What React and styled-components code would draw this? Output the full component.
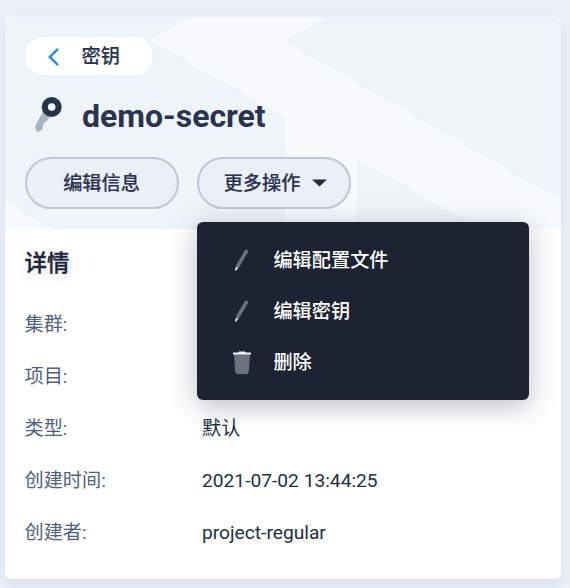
import React from 'react';
import styled, { createGlobalStyle } from 'styled-components';

const Global = createGlobalStyle`
  * { box-sizing: border-box; }
  body {
    margin: 0;
    background: #eaeff8;
    font-family: Roboto, "Noto Sans CJK SC", sans-serif;
    font-size: 19.2px;
    color: #242e42;
  }
`;

const Page = styled.main`
  height: 588px;
  padding: 17px 9px 9px 5px;
  overflow: hidden;
`;

const Card = styled.section`
  height: 562px;
  border-radius: 6px;
  background: #fff;
  box-shadow: 0 6px 12px rgba(36, 46, 66, 0.08);
`;

const Header = styled.header`
  position: relative;
  height: 212px;
  padding: 20px;
  border-radius: 9px 9px 0 0;
  background: #eff4f8;
`;

const Pattern = styled.svg`
  position: absolute;
  inset: 0;
  width: 556px;
  height: 212px;
`;

const HeaderContent = styled.div`
  position: relative;
`;

const BackLink = styled.a`
  display: flex;
  align-items: center;
  width: 128px;
  height: 38px;
  padding: 2px 0 0 22px;
  gap: 21.5px;
  border-radius: 19px;
  background: #fff;
  color: #2c3550;
  font-weight: 500;
  -webkit-text-stroke: 0.15px currentColor;
  line-height: 38px;

  svg { margin-bottom: 1px; }
`;

const TitleRow = styled.div`
  display: flex;
  align-items: center;
  height: 40px;
  margin-top: 21px;
  padding-left: 6px;
  gap: 11px;
`;

const Title = styled.h1`
  margin: 0;
  font-size: 32px;
  font-weight: 700;
  line-height: 40px;
  color: #2a3350;
`;

const Actions = styled.div`
  display: flex;
  gap: 18px;
  margin-top: 21px;
`;

const Button = styled.button`
  display: flex;
  align-items: center;
  justify-content: center;
  gap: 12px;
  width: 154px;
  height: 52px;
  padding: ${({ $menu }) => ($menu ? '0 0 2px 3px' : '0 1px 2px 0')};
  border: 2px solid #c0c8d4;
  border-radius: 26px;
  background: #eaeff8;
  color: #2a3350;
  font: inherit;
  font-weight: 500;
  -webkit-text-stroke: 0.15px currentColor;

  svg { margin-top: 2px; }
`;

const MenuAnchor = styled.div`
  position: relative;
`;

const Menu = styled.div`
  position: absolute;
  z-index: 2;
  left: 0;
  top: 64.5px;
  width: 332px;
  height: 178.5px;
  padding-top: 13px;
  border-radius: 6px;
  background: #1d2333;
  box-shadow: 0 6px 28px rgba(36, 46, 66, 0.32);
`;

const MenuItem = styled.div`
  display: flex;
  align-items: center;
  height: 51px;
  padding-left: 32px;
  gap: 18.4px;
  color: #fff;
  font-weight: 500;
`;

const MenuText = styled.span`
  padding-bottom: 2px;
`;

const Details = styled.div`
  padding: 17px 20px 0 19.5px;
`;

const SectionTitle = styled.h2`
  margin: 0 0 19px;
  height: 34px;
  font-size: 22.4px;
  font-weight: 500;
  -webkit-text-stroke: 0.35px currentColor;
  line-height: 34px;
  color: #1d2438;
  text-shadow: 0 5px 10px rgba(36, 46, 66, 0.16);
`;

const Row = styled.div`
  display: flex;
  height: 52px;
  line-height: 52px;
`;

const Label = styled.span`
  width: 177.5px;
  color: #526080;
`;

const Value = styled.span`
  color: #242e42;
`;

const KeyIcon = () => (
  <svg width="40" height="40" viewBox="0 0 40 40">
    <path d="M13 14 5 28.500Q4.100 30.500 4.400 32.500L6.200 36 10.800 34.300 12 31.300 11.700 29 13.200 27 16.500 24.500 19.500 19Z" fill="#a7b4c3" />
    <circle cx="20.700" cy="11" r="6.900" fill="none" stroke="#283548" strokeWidth="6.200" />
  </svg>
);

const PenIcon = () => (
  <svg width="26" height="26" viewBox="0 0 26 26">
    <path d="M7 18.300 15.900 3.300Q16.800 1.900 18.300 2.700 19.700 3.700 18.800 5.300L10.200 20.300Z" fill="#6c717d" />
    <path d="M6.900 18.700 10 20.500 6.200 24Z" fill="#a5a8b0" />
    <path d="M6.600 20.700 8.600 21.800 6.200 24Z" fill="#fff" />
  </svg>
);

const TrashIcon = () => (
  <svg width="26" height="26" viewBox="0 0 26 26">
    <path d="M5 5H21L19.800 22.600Q19.600 25 17.700 25H8.300Q6.400 25 6.200 22.600Z" fill="#6c717d" />
    <path d="M4 3.500H9.200L10 2.500H16L16.800 3.500H22V5.500H4Z" fill="#eeeff1" />
  </svg>
);

const details = [
  ['集群:', ''],
  ['项目:', ''],
  ['类型:', '默认'],
  ['创建时间:', '2021-07-02 13:44:25'],
  ['创建者:', 'project-regular'],
];

export default function App() {
  return (
    <Page>
      <Global />
      <Card>
        <Header>
          <Pattern viewBox="0 0 556 212" fill="#f6fafd">
            <path d="M145 23.500 185.500 0H322L280 24.300 556 183.500V212H475L352 141.500V212H280V100.500Z" />
            <path d="M0 184.500 48 212H0Z" />
          </Pattern>
          <HeaderContent>
            <BackLink>
              <svg width="13" height="20" viewBox="0 0 13 20" fill="none">
                <path d="M11 1.800 2.800 10 11 18.200" stroke="#328fcb" strokeWidth="2.500" />
              </svg>
              密钥
            </BackLink>
            <TitleRow>
              <KeyIcon />
              <Title>demo-secret</Title>
            </TitleRow>
            <Actions>
              <Button>编辑信息</Button>
              <MenuAnchor>
                <Button $menu>
                  更多操作
                  <svg width="15" height="8" viewBox="0 0 15 8">
                    <path d="M0 .5H15L7.500 7.500Z" fill="#242e42" />
                  </svg>
                </Button>
                <Menu>
                  <MenuItem><PenIcon /><MenuText>编辑配置文件</MenuText></MenuItem>
                  <MenuItem><PenIcon /><MenuText>编辑密钥</MenuText></MenuItem>
                  <MenuItem><TrashIcon /><MenuText>删除</MenuText></MenuItem>
                </Menu>
              </MenuAnchor>
            </Actions>
          </HeaderContent>
        </Header>
        <Details>
          <SectionTitle>详情</SectionTitle>
          {details.map(([label, value]) => (
            <Row key={label}>
              <Label>{label}</Label>
              <Value>{value}</Value>
            </Row>
          ))}
        </Details>
      </Card>
    </Page>
  );
}
